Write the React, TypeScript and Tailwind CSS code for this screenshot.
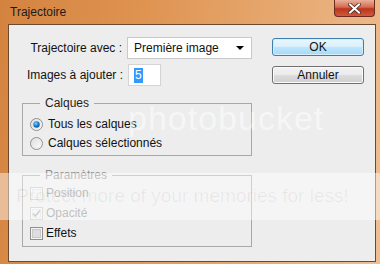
import React from "react";

function Radio({ checked }: { checked?: boolean }) {
  return (
    <svg width="13" height="13" viewBox="0 0 13 13">
      <defs>
        <linearGradient id="rbg" x1="0" y1="0" x2="1" y2="1">
          <stop offset="0" stopColor="#dcdcdc" />
          <stop offset="1" stopColor="#ffffff" />
        </linearGradient>
        <radialGradient id="rdot" cx="0.4" cy="0.35" r="0.7">
          <stop offset="0" stopColor="#8fd3ff" />
          <stop offset="0.5" stopColor="#1f86d0" />
          <stop offset="1" stopColor="#0b4f8c" />
        </radialGradient>
      </defs>
      <circle cx="6.5" cy="6.5" r="6" fill="url(#rbg)" stroke="#8e8f8f" />
      <circle cx="6.5" cy="6.5" r="4.5" fill="none" stroke="#e6e6e6" strokeWidth="0.8" />
      {checked && <circle cx="6.5" cy="6.5" r="3.2" fill="url(#rdot)" />}
    </svg>
  );
}

function Check({ checked, disabled }: { checked?: boolean; disabled?: boolean }) {
  const border = disabled ? "#c4c4c4" : "#8e8f8f";
  return (
    <svg width="13" height="13" viewBox="0 0 13 13">
      <rect x="0.5" y="0.5" width="12" height="12" fill="#f4f4f4" stroke={border} />
      <rect x="2.5" y="2.5" width="8" height="8" fill={disabled ? "#f0f0f0" : "#dedede"} stroke={disabled ? "#e2e2e2" : "#c8c8c8"} />
      {checked && (
        <path d="M3 6.5 L5.3 9 L10 3.5" fill="none" stroke={disabled ? "#a8a8a8" : "#1f3a73"} strokeWidth="1.6" />
      )}
    </svg>
  );
}

export default function App() {
  return (
    <div className="relative w-[380px] h-[264px] overflow-hidden font-['Liberation_Sans',Arial,sans-serif] text-[12px] text-[#111] bg-[linear-gradient(100deg,#d4833f_0%,#df9452_35%,#e6a76e_65%,#efbf93_100%)]">
      {/* title bar */}
      <div className="flex h-[24px] items-start justify-between">
        <div className="pl-[10px] pt-[5px] leading-[15px] text-[#1b1b1b]">Trajectoire</div>
        <div className="mr-[5px] flex h-[17px] w-[41px] items-center justify-center rounded-b-[4px] border border-t-0 border-[#6e2a1c] bg-[linear-gradient(#eab09b,#d66a4d_45%,#b8361d_55%,#d0593b)]">
          <svg width="13" height="11" viewBox="0 0 13 11">
            <path d="M2 1.5 L11 9.5 M11 1.5 L2 9.5" stroke="#4a2a22" strokeWidth="3.6" strokeLinecap="square" />
            <path d="M2 1.5 L11 9.5 M11 1.5 L2 9.5" stroke="#ffffff" strokeWidth="2" strokeLinecap="square" />
          </svg>
        </div>
      </div>

      {/* client area */}
      <div className="ml-[8px] h-[238px] w-[368px] border border-[#6b4a32] bg-[#ededed]">
        <div className="flex pt-[12px]">
          <div className="ml-[13px] w-[230px]">
            <div className="flex h-[22px] items-center">
              <div className="w-[106px] pr-[5px] text-right">Trajectoire avec :</div>
              <div className="flex h-[22px] w-[126px] items-center justify-between border border-[#c9c9c9] bg-white pl-[6px] pr-[7px]">
                <span>Première image</span>
                <svg width="8" height="4" viewBox="0 0 8 4">
                  <path d="M0 0 H8 L4 4 Z" fill="#000" />
                </svg>
              </div>
            </div>
            <div className="mt-[5px] flex h-[22px] items-center">
              <div className="w-[106px] pr-[5px] text-right">Images à ajouter :</div>
              <div className="flex h-[22px] w-[33px] items-center border border-[#d4d4d4] bg-white pl-[5px]">
                <span className="bg-[#3399ff] px-[1px] leading-[15px] text-white">5</span>
              </div>
            </div>

            <fieldset className="mt-[10px] h-[60px] border border-[#a8a8a8] pl-[7px]">
              <legend className="ml-[10px] px-[5px] leading-[14px] text-[#1e1e1e]">Calques</legend>
              <div className="mt-[5px] flex h-[18px] items-center gap-[5px]">
                <Radio checked />
                <span>Tous les calques</span>
              </div>
              <div className="mt-[1px] flex h-[18px] items-center gap-[5px]">
                <Radio />
                <span>Calques sélectionnés</span>
              </div>
            </fieldset>

            <fieldset className="mt-[12px] h-[79px] border border-[#a8a8a8] pl-[7px]">
              <legend className="ml-[10px] px-[5px] leading-[14px] text-[#8d8d8d]">Paramètres</legend>
              <div className="mt-[1px] flex h-[20px] items-center gap-[3px] text-[#8d8d8d]">
                <Check disabled />
                <span>Position</span>
              </div>
              <div className="flex h-[20px] items-center gap-[3px] text-[#8d8d8d]">
                <Check checked disabled />
                <span>Opacité</span>
              </div>
              <div className="flex h-[20px] items-center gap-[3px]">
                <Check />
                <span>Effets</span>
              </div>
            </fieldset>
          </div>

          <div className="ml-[20px] flex flex-col gap-[10px] pt-[1px]">
            <button className="flex h-[18px] w-[92px] items-center justify-center rounded-[3px] border border-[#3c7fb1] bg-[linear-gradient(#eaf6fd,#d9f0fc_50%,#bee6fd_50%,#a7d9f5)] leading-none shadow-[inset_0_0_0_1px_#d6eefb]">
              OK
            </button>
            <button className="flex h-[18px] w-[92px] items-center justify-center rounded-[3px] border border-[#707070] bg-[linear-gradient(#f2f2f2,#ebebeb_50%,#dddddd_50%,#cfcfcf)] leading-none shadow-[inset_0_0_0_1px_#fbfbfb]">
              Annuler
            </button>
          </div>
        </div>
      </div>

      {/* photobucket watermark */}
      <div className="pointer-events-none absolute left-[128px] top-[98px] text-[34px] leading-[40px] tracking-[1px] text-white/50">
        photobucket
      </div>
      <div className="pointer-events-none absolute left-0 top-[173px] flex h-[47px] w-[380px] items-center justify-center bg-white/45 pr-[15px] text-[19px] text-black/[0.06]">
        Protect more of your memories for less!
      </div>
    </div>
  );
}
